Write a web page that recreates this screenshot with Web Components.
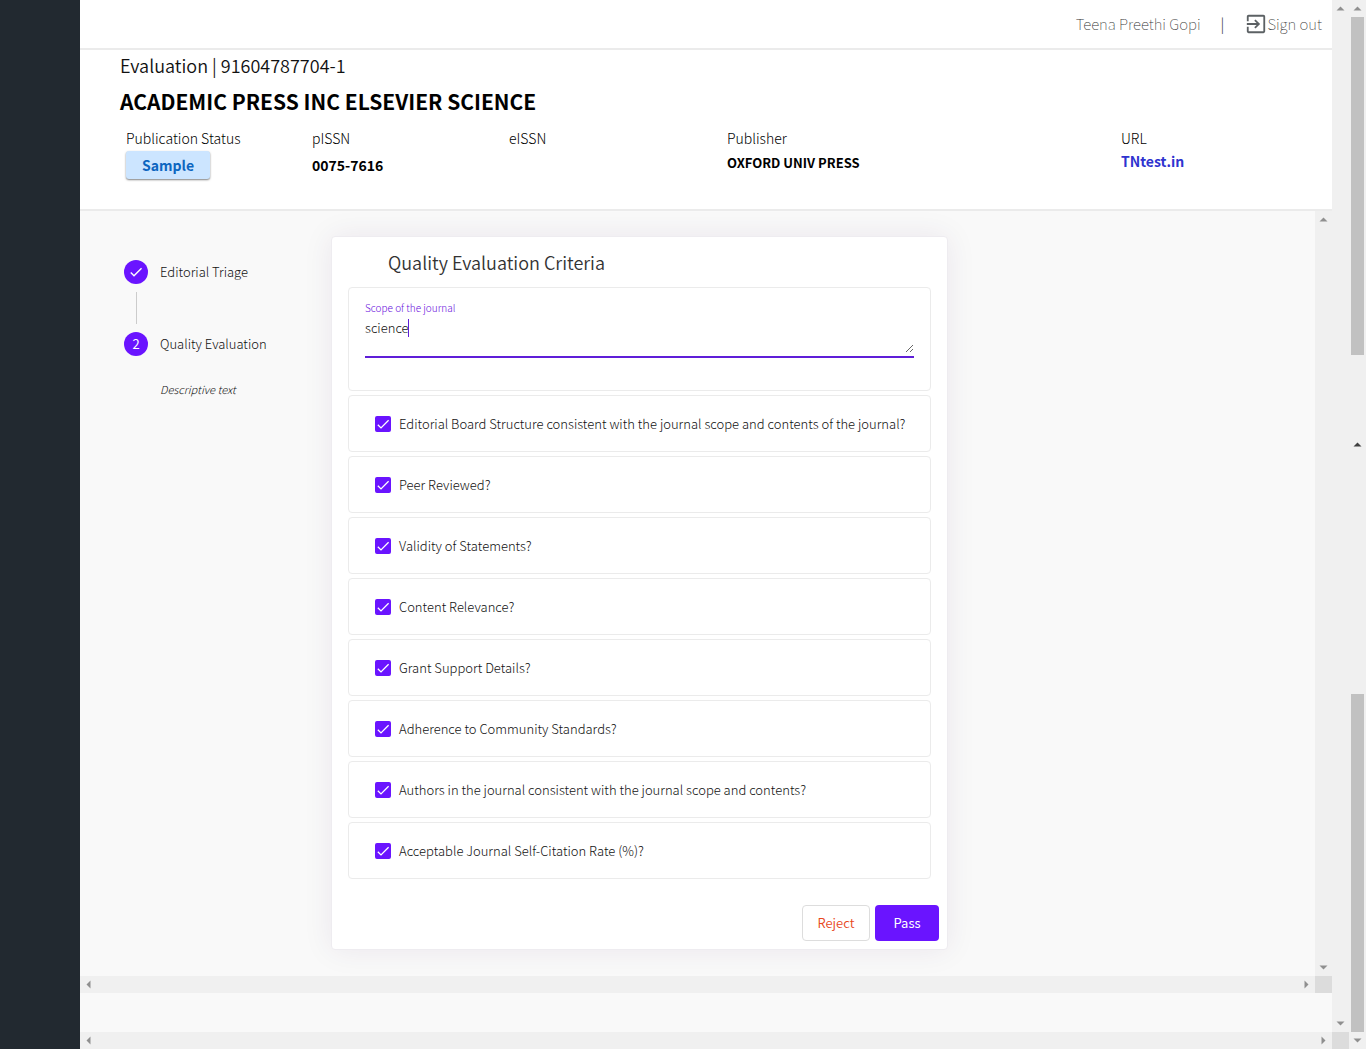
<!DOCTYPE html>
<html lang="en">
<head>
<meta charset="utf-8">
<title>Evaluation</title>
<style>
  html, body { height: 100%; margin: 0; }
  body {
    font-family: "Noto Sans CJK SC", "Noto Sans", sans-serif;
    font-weight: 300;
    color: #111;
    overflow: hidden;
  }
</style>
</head>
<body>
<evaluation-app></evaluation-app>

<script>
const define = (name, html, setup) => {
  const template = document.createElement('template');
  template.innerHTML = html;
  customElements.define(name, class extends HTMLElement {
    constructor() {
      super();
      this.attachShadow({ mode: 'open' }).append(template.content.cloneNode(true));
    }
    connectedCallback() { if (setup) setup(this, this.shadowRoot); }
  });
};

/* Scroll rail: arrows at both ends, optional thumb between them */
define('scroll-rail', `
  <style>
    :host { display: flex; flex-direction: column; align-items: center; justify-content: space-between; width: 17px; background: #f0f0f0; }
    :host([horizontal]) { flex-direction: row; width: auto; height: 17px; }
    .end { width: 17px; height: 17px; flex: none; display: flex; align-items: center; justify-content: center; }
    svg { display: block; width: 9px; height: 9px; fill: #8f8f8f; }
    :host([strong]) .first svg { fill: #404040; }
    .last svg { transform: rotate(180deg); }
    :host([horizontal]) .first svg { transform: rotate(-90deg); }
    :host([horizontal]) .last svg { transform: rotate(90deg); }
    :host([open]) .last { display: none; }
    .track { flex: 1; width: 13px; display: flex; flex-direction: column; }
    :host([thumb="end"]) .track { justify-content: flex-end; }
    .thumb { display: none; width: 13px; height: var(--thumb, 50%); background: #c1c1c1; }
    :host([thumb]) .thumb { display: block; }
  </style>
  <div class="end first"><svg viewBox="0 0 9 9"><path d="M.5 6.5L4.5 2.5L8.5 6.5Z"/></svg></div>
  <div class="track"><div class="thumb"></div></div>
  <div class="end last"><svg viewBox="0 0 9 9"><path d="M.5 6.5L4.5 2.5L8.5 6.5Z"/></svg></div>
`);

/* Frame with a scrolling content area and its rails */
define('scroll-frame', `
  <style>
    :host { display: grid; grid-template-columns: minmax(0, 1fr) 17px; grid-template-rows: minmax(0, 1fr) 17px; min-height: 0; }
    .corner { background: #dcdcdc; }
    .content { overflow: hidden; display: flex; flex-direction: column; }
  </style>
  <div class="content"><slot></slot></div>
  <scroll-rail></scroll-rail>
  <scroll-rail horizontal></scroll-rail>
  <div class="corner"></div>
`);

define('user-bar', `
  <style>
    :host { display: flex; justify-content: flex-end; align-items: center; height: 48px; padding-right: 10px; border-bottom: 2px solid #ebebeb; background: #fff; font-size: 15px; line-height: 20px; font-weight: 100; color: #333; }
    .bar { margin: 0 21px 0 20px; font-weight: 300; }
    button { display: flex; align-items: center; border: 0; padding: 0; background: none; font: inherit; color: inherit; }
    svg { width: 22px; height: 22px; fill: #5c6164; }
  </style>
  <span><slot></slot></span>
  <span class="bar">|</span>
  <button type="button">
    <svg viewBox="0 0 24 24" aria-hidden="true"><path d="M10.09 15.59L11.5 17l5-5-5-5-1.41 1.41L12.67 11H2v2h10.67l-2.58 2.59zM20 2H4c-1.1 0-2 .9-2 2v5h2V4h16v16H4v-5H2v5c0 1.1.9 2 2 2h16c1.1 0 2-.9 2-2V4c0-1.1-.9-2-2-2z"/></svg>
    Sign out
  </button>
`);

define('info-field', `
  <style>
    :host { display: flex; flex-direction: column; align-items: flex-start; font-size: 14px; line-height: 20px; color: #000; }
    .value { font-weight: 700; color: #000; font-size: 14px; line-height: 34px; }
    :host([compact]) .value { font-size: 13px; line-height: 30px; }
    ::slotted(a) { display: block; color: #2f33cf; text-decoration: none; line-height: 26px; }
    ::slotted(button) { display: block; margin: 3px 0 0; border: 0; border-radius: 3px; padding: 0 16px; height: 28px; background: #cce5ff; color: #0d66c0; font: inherit; font-size: 14px; line-height: 28px; box-shadow: 0 1px 2px rgba(0,0,0,.5); }
  </style>
  <span class="label"></span>
  <div class="value"><slot></slot></div>
`, (el, root) => { root.querySelector('.label').textContent = el.getAttribute('label'); });

define('journal-header', `
  <style>
    :host { display: block; background: #fff; height: 159px; border-bottom: 2px solid #ebebeb; }
    .id { margin: 0 0 0 40px; padding-top: 2px; font-size: 18px; line-height: 26px; font-weight: 350; color: #111; }
    h1 { margin: 8px 0 0 40px; font-size: 21px; line-height: 30px; font-weight: 700; color: #000; }
    .fields { display: grid; grid-template-columns: 186fr 197fr 218fr 394fr 211fr; padding-left: 46px; margin-top: 12px; }
  </style>
  <p class="id">Evaluation | 91604787704-1</p>
  <h1>ACADEMIC PRESS INC ELSEVIER SCIENCE</h1>
  <div class="fields">
    <info-field label="Publication Status"><button type="button">Sample</button></info-field>
    <info-field label="pISSN">0075-7616</info-field>
    <info-field label="eISSN"></info-field>
    <info-field label="Publisher" compact>OXFORD UNIV PRESS</info-field>
    <info-field label="URL"><a href="#">TNtest.in</a></info-field>
  </div>
`);

define('step-item', `
  <style>
    :host { display: flex; align-items: center; gap: 12px; height: 24px; font-size: 13px; line-height: 24px; white-space: nowrap; }
    .dot { width: 24px; height: 24px; border-radius: 50%; background: #6a14ff; color: #fff; font-weight: 400; display: grid; place-items: center; flex: none; }
    svg { display: none; width: 16px; height: 16px; fill: #fff; }
    :host([done]) svg { display: block; }
  </style>
  <span class="dot"><svg viewBox="0 0 24 24" aria-hidden="true"><path d="M9 16.17L4.83 12l-1.42 1.41L9 19 21 7l-1.41-1.41z"/></svg><slot name="mark"></slot></span>
  <span><slot></slot></span>
`);

define('step-list', `
  <style>
    :host { display: flex; flex-direction: column; width: 207px; flex: none; padding-top: 24px; }
    .line { width: 1px; height: 32px; margin: 8px 0 8px 12px; background: #ccc; }
    .note { margin: 23px 0 0 36px; font-size: 11px; line-height: 20px; font-style: italic; }
  </style>
  <step-item done>Editorial Triage</step-item>
  <div class="line"></div>
  <step-item><span slot="mark">2</span>Quality Evaluation</step-item>
  <p class="note">Descriptive text</p>
`);

define('scope-field', `
  <style>
    :host { display: block; box-sizing: border-box; height: 104px; padding: 11px 16px; border: 1px solid #ebebeb; border-radius: 4px; }
    label { display: block; font-size: 10px; line-height: 18px; color: #6a10dd; }
    .box { position: relative; border-bottom: 2px solid #5f1ed8; padding-bottom: 3px; }
    textarea { display: block; box-sizing: border-box; width: 100%; height: 36px; margin: 0; border: 0; padding: 0; outline: 0; background: none; resize: vertical; font: inherit; font-size: 13px; line-height: 22px; color: #111; overflow: hidden; }
    .caret { position: absolute; left: 43px; top: 2px; width: 1px; height: 18px; background: #5f1ed8; }
  </style>
  <label for="scope">Scope of the journal</label>
  <div class="box"><textarea id="scope">science</textarea><span class="caret"></span></div>
`);

define('check-row', `
  <style>
    :host { display: flex; align-items: center; box-sizing: border-box; height: 57px; padding-left: 26px; border: 1px solid #ebebeb; border-radius: 4px; font-size: 13px; line-height: 20px; }
    label { display: flex; align-items: center; gap: 8px; white-space: nowrap; }
    .tick { display: grid; }
    .tick > * { grid-area: 1 / 1; width: 16px; height: 16px; }
    input { appearance: none; margin: 0; border-radius: 2px; border: 2px solid #777; box-sizing: border-box; }
    input:checked { background: #6a14ff; border-color: #6a14ff; }
    svg { pointer-events: none; fill: none; stroke: #fff; stroke-width: 1.3; }
  </style>
  <label><span class="tick"><input type="checkbox" checked><svg viewBox="0 0 16 16" aria-hidden="true"><path d="M2.8 8.7L6 11.9L13.6 4.2"/></svg></span><slot></slot></label>
`);

define('criteria-card', `
  <style>
    :host { display: flex; flex-direction: column; box-sizing: border-box; flex: 1; max-width: 617px; padding: 9px 16px 8px; background: #fff; border: 1px solid #eeecf0; border-radius: 4px; box-shadow: 0 0 30px rgba(60,20,90,.08); }
    h2 { margin: 0 0 9px 40px; font-size: 18px; line-height: 32px; font-weight: 350; color: #333; }
    form { display: flex; flex-direction: column; gap: 4px; }
    .actions { display: flex; justify-content: flex-end; gap: 5px; margin: 22px -8px 0 0; }
    button { height: 36px; border-radius: 4px; font: inherit; font-size: 13px; line-height: 32px; padding: 0; }
    .reject { width: 68px; border: 1px solid #ddd; background: #fff; color: #e8481c; font-weight: 350; }
    .pass { width: 64px; border: 0; background: #6a14ff; color: #fff; font-weight: 400; }
  </style>
  <h2>Quality Evaluation Criteria</h2>
  <form>
    <scope-field></scope-field>
    <check-row>Editorial Board Structure consistent with the journal scope and contents of the journal?</check-row>
    <check-row>Peer Reviewed?</check-row>
    <check-row>Validity of Statements?</check-row>
    <check-row>Content Relevance?</check-row>
    <check-row>Grant Support Details?</check-row>
    <check-row>Adherence to Community Standards?</check-row>
    <check-row>Authors in the journal consistent with the journal scope and contents?</check-row>
    <check-row>Acceptable Journal Self-Citation Rate (%)?</check-row>
    <div class="actions">
      <button type="button" class="reject">Reject</button>
      <button type="button" class="pass">Pass</button>
    </div>
  </form>
`);

define('evaluation-app', `
  <style>
    :host { display: flex; height: 100vh; background: #f9f9f9; }
    nav { width: 80px; flex: none; background: #222930; }
    .page { flex: 1; min-width: 0; }
    .inner { flex: 1; margin-bottom: 39px; }
    .work { display: flex; align-items: flex-start; padding: 25px 44px; }
    .rails { display: flex; flex-direction: column; flex: none; }
    .rails > :first-child { flex: 436; --thumb: 338px; }
    .rails > :last-child { flex: 613; --thumb: 338px; }
  </style>
  <nav></nav>
  <scroll-frame class="page">
    <user-bar>Teena Preethi Gopi</user-bar>
    <journal-header></journal-header>
    <scroll-frame class="inner">
      <div class="work">
        <step-list></step-list>
        <criteria-card></criteria-card>
      </div>
    </scroll-frame>
  </scroll-frame>
  <div class="rails">
    <scroll-rail thumb="start" open></scroll-rail>
    <scroll-rail thumb="end" strong></scroll-rail>
  </div>
`);
</script>
</body>
</html>
